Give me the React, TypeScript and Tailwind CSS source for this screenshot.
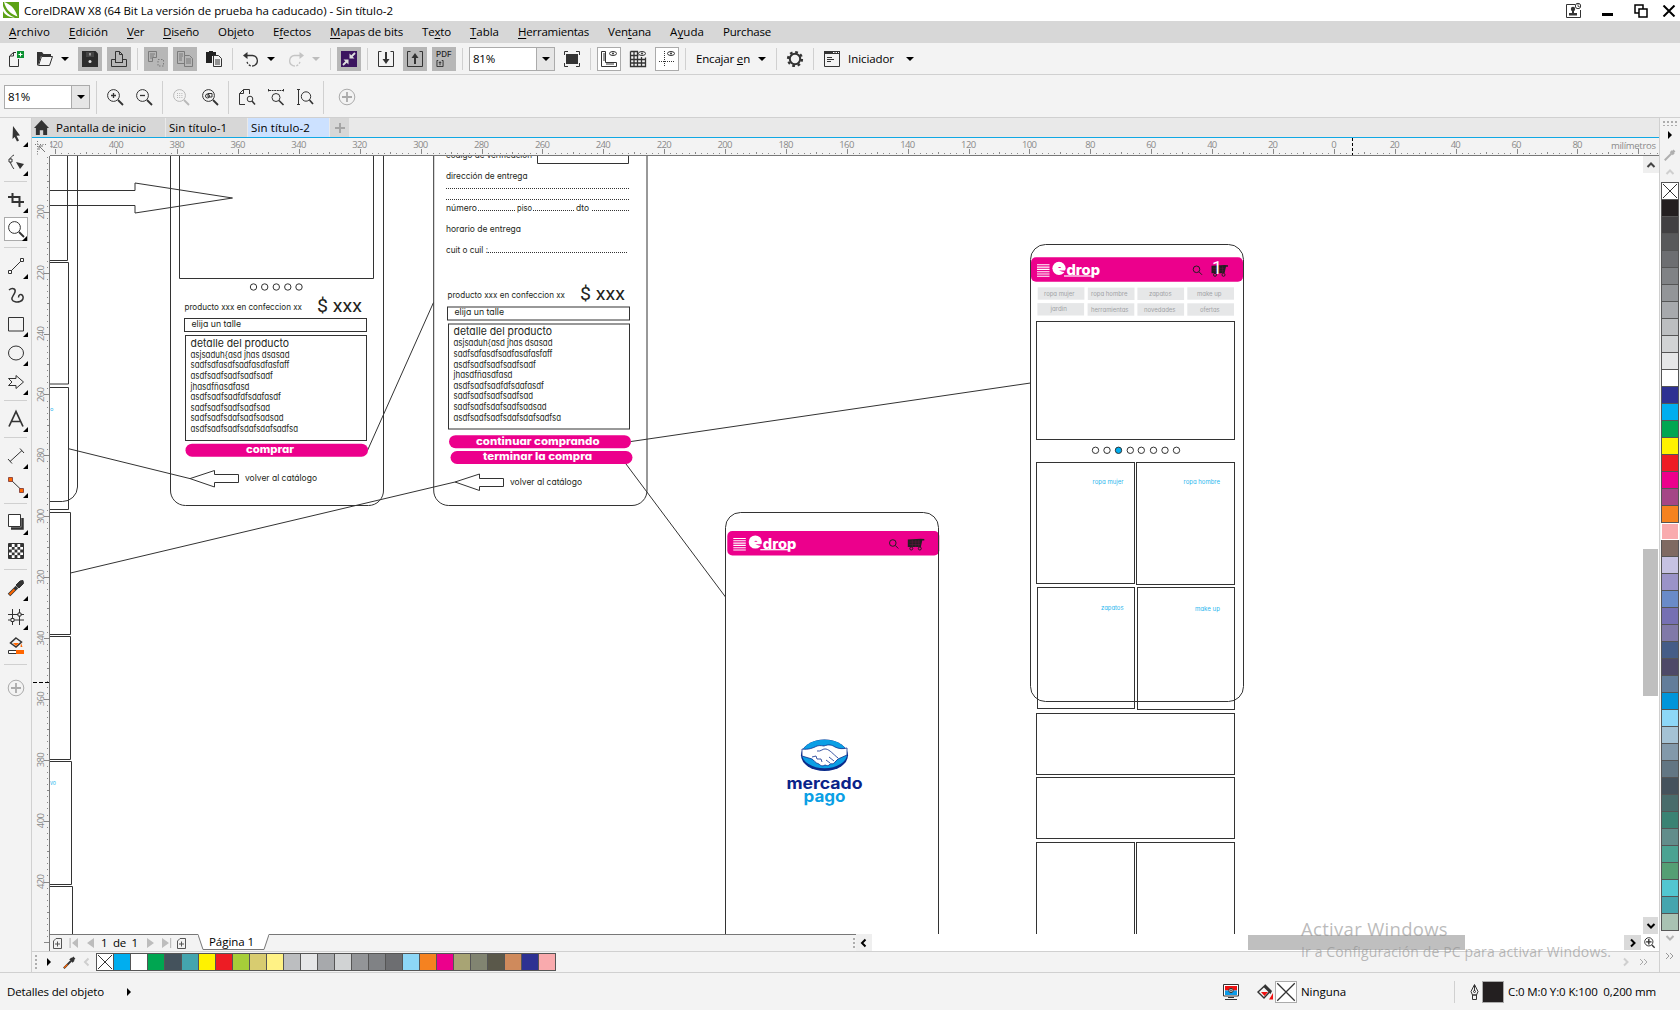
import { useLayoutEffect, useRef, useState } from "react";
import type { ReactNode } from "react";

/* Single-line label whose tracking is adjusted so that it spans exactly `w` pixels. */
function Fit({ w, children, className = "" }: { w: number; children: ReactNode; className?: string }) {
  const ref = useRef<HTMLSpanElement>(null);
  const [ls, setLs] = useState(0);
  useLayoutEffect(() => {
    const el = ref.current;
    if (!el) return;
    el.style.letterSpacing = "0px";
    const n = (el.textContent || "").length;
    const next = (w - el.getBoundingClientRect().width) / Math.max(1, n);
    el.style.letterSpacing = next + "px";
    setLs(next);
  }, [w]);
  return (
    <span className={"inline-block shrink-0 whitespace-pre " + className} style={{ width: w }}>
      <span ref={ref} style={{ letterSpacing: ls }}>
        {children}
      </span>
    </span>
  );
}

function Icon({ children, className = "" }: { children: ReactNode; className?: string }) {
  return (
    <svg viewBox="0 0 16 16" className={"h-4 w-4 shrink-0 overflow-visible " + className} fill="none" stroke="#333" strokeWidth="1">
      {children}
    </svg>
  );
}

function Cell({ children, kind = "plain" }: { children: ReactNode; kind?: "plain" | "gray" | "framed" }) {
  const look = kind === "gray" ? "bg-[#b7b7b7]" : kind === "framed" ? "border border-[#ababab] bg-white" : "";
  return <div className={"flex h-6 w-6 shrink-0 items-center justify-center " + look}>{children}</div>;
}

const Sep = ({ tall = false }: { tall?: boolean }) => (
  <div className={"mx-px w-px shrink-0 bg-[#d0d0d0] " + (tall ? "h-[33px]" : "h-[22px]")} />
);

const Caret = ({ light = false }: { light?: boolean }) => (
  <div className="flex w-4 shrink-0 justify-center">
    <div className={"h-0 w-0 border-x-4 border-t-4 border-x-transparent " + (light ? "border-t-[#bdbdbd]" : "border-t-black")} />
  </div>
);

const Combo = () => (
  <div className="flex h-6 w-[86px] shrink-0 border border-[#ababab] bg-white">
    <div className="flex w-[66px] items-center pl-[3px]">
      <Fit w={22}>81%</Fit>
    </div>
    <div className="flex w-[18px] items-center justify-center border-l border-[#ababab] bg-[#e6e6e6]">
      <Caret />
    </div>
  </div>
);

const PlusCircle = () => (
  <svg viewBox="0 0 18 18" className="h-[18px] w-[18px]" fill="none" stroke="#ababab">
    <circle cx="9" cy="9" r="7.8" />
    <path d="M9 4v10M4 9h10" strokeWidth="1.8" />
  </svg>
);

const menus: [ReactNode, number][] = [
  [<><u>A</u>rchivo</>, 41],
  [<><u>E</u>dición</>, 39],
  [<><u>V</u>er</>, 17],
  [<><u>D</u>iseño</>, 36],
  [<>Ob<u>j</u>eto</>, 36],
  [<>E<u>f</u>ectos</>, 38],
  [<><u>M</u>apas de bits</>, 73],
  [<>Te<u>x</u>to</>, 29],
  [<><u>T</u>abla</>, 29],
  [<><u>H</u>erramientas</>, 71],
  [<>Ven<u>t</u>ana</>, 43],
  [<>A<u>y</u>uda</>, 34],
  [<>Purchase</>, 48],
];

function TitleBar() {
  return (
    <div className="flex h-[21px] shrink-0 items-center bg-white">
      <svg viewBox="0 0 16 16" className="ml-[3px] h-4 w-4 -translate-y-px">
        <path d="M0 0h16v16H0z" fill="#5ca114" />
        <path d="M1 0C7 2 12 6 14.5 14.500C8 12 3 8 1 0zM0 4C2 10 7 14 12 15.500C6 15.500 2 13 0 9z" fill="#fff" />
      </svg>
      <Fit w={369} className="ml-[5px]">CorelDRAW X8 (64 Bit La versión de prueba ha caducado) - Sin título-2</Fit>
      <div className="ml-auto flex items-center">
        <svg viewBox="0 0 16 15" className="mr-5 h-[15px] w-4 overflow-visible" fill="none" stroke="#333">
          <path d="M9 1.500H.5v13h14V7" />
          <circle cx="7" cy="6" r="2.200" fill="#333" stroke="none" />
          <path d="M6 7h2v3h3v2.500H3V10h3z" fill="#333" stroke="none" />
          <circle cx="12" cy="3" r="2.700" /><path d="M12 1v2.500h1.500" strokeWidth=".8" />
        </svg>
        <div className="mr-[21px] mt-[7px] h-[3px] w-[11px] bg-black" />
        <svg viewBox="0 0 14 14" className="mr-[14px] h-[14px] w-[14px]" fill="none" stroke="#000" strokeWidth="1.500">
          <path d="M1 1h8v8H1z" /><path d="M5 5h8v8H5z" fill="#fff" />
        </svg>
        <svg viewBox="0 0 14 12" className="mr-[4px] h-3 w-[14px]" stroke="#000" strokeWidth="2">
          <path d="M1.500.5l11 11M12.500.5l-11 11" />
        </svg>
      </div>
    </div>
  );
}

const UndoShape = ({ c }: { c: string }) => (
  <g stroke={c}>
    <path d="M3.500 4.500H9.500a5.300 5.300 0 0 1 1.500 10.200" strokeWidth="1.300" />
    <path d="M11 14.700a5.300 5.300 0 0 1-7-4" strokeWidth="1.300" strokeDasharray="2 1.300" />
    <path d="M4.500 1v7L0 4.500z" fill={c} stroke="none" />
  </g>
);

function StandardBar() {
  return (
    <div className="flex h-[31px] shrink-0 items-center gap-[5px] pl-[4px]">
      <Cell><Icon><path d="M8 1.500H5.500L1.500 5v10.500h9V8M5.500 1.500V5H2" /><path d="M9 0h7v7H9z" fill="#0b9232" stroke="none" /><path d="M12.500 1.500v4M10.500 3.500h4" stroke="#fff" /></Icon></Cell>
      <div className="flex items-center">
        <Cell><Icon><path d="M0 15V1h5l1.500 2H14v2H4L2 12z" fill="#333" stroke="none" /><path d="M4.500 5.500h11l-3 9H1.500z" fill="#f3f3f3" /></Icon></Cell>
        <Caret />
      </div>
      <Cell kind="gray"><Icon><path d="M0 0h13.500L16 2.500V16H0z" fill="#2b2b2b" stroke="none" /><path d="M4 1h8v5H4z" fill="#444" stroke="none" /><path d="M8 2v2.500" stroke="#eee" /><circle cx="8" cy="10.500" r="1.500" fill="#ddd" stroke="none" /></Icon></Cell>
      <Cell kind="gray"><Icon><path d="M4.500 11V.500h4l3 3V11M8.500.5v3h3M4 8.500H.500v7h15v-7H12M4 11.500h8" /></Icon></Cell>
      <Sep />
      <Cell kind="gray"><Icon className="opacity-45"><path d="M.5.500h8v6h-4v4h-4zM2 3h5M2 5h4M2 7h2" /><path d="M10 8.500h5.500v6.500H10z" strokeDasharray="1.500 1.500" /></Icon></Cell>
      <Cell kind="gray"><Icon className="opacity-45"><path d="M7 12.500H.500V.5h7v4M2 3h4M2 5h4M2 7h3M2 9h3" /><path d="M7.500 4.500h5l3 3v8h-8zM9 8h5M9 10h5M9 12h5" /></Icon></Cell>
      <Cell><Icon><path d="M0 1h3V0h4v1h3v4H6v7H0z" fill="#222" stroke="none" /><path d="M7.500 4.500h5l3 3v8h-8zM9 9h5M9 11h5M9 13h5" /></Icon></Cell>
      <Sep />
      <div className="flex items-center">
        <Cell><Icon><UndoShape c="#333" /></Icon></Cell>
        <Caret />
      </div>
      <div className="flex items-center">
        <Cell><Icon><g transform="matrix(-1 0 0 1 16 0)"><UndoShape c="#c4c4c4" /></g></Icon></Cell>
        <Caret light />
      </div>
      <Sep />
      <Cell kind="gray"><Icon><path d="M0 0h16v16H0z" fill="#3b145f" stroke="none" /><path d="M14 2l-4 4M2 14l4-4" stroke="#ddd" strokeWidth="1.800" /><path d="M8.500 2.500v5h5zM7.500 13.500v-5h-5z" fill="#ddd" stroke="none" /></Icon></Cell>
      <Sep />
      <Cell><Icon><path d="M3.500.500h-3v15h15V.500h-3" /><path d="M8 1v9" strokeWidth="2" /><path d="M4.500 8h7L8 13z" fill="#333" stroke="none" /></Icon></Cell>
      <Cell kind="gray"><Icon><path d="M3.500.500h-3v15h15V.500h-3" /><path d="M8 13V5" strokeWidth="2" /><path d="M4.500 7h7L8 2z" fill="#333" stroke="none" /></Icon></Cell>
      <Cell kind="gray">
        <div className="flex h-4 w-4 flex-col">
          <span className="font-['Inter'] text-[8px] font-medium leading-[7px] tracking-[0.1px] text-[#222]">PDF</span>
          <svg viewBox="0 0 8 8" className="mt-[2px] h-[7px] w-[8px]" fill="none" stroke="#222"><path d="M2 .500H.500v7h7v-7H6M4 6V2M2.500 3.500L4 2l1.500 1.500" /></svg>
        </div>
      </Cell>
      <Sep />
      <Combo />
      <Cell><Icon><path d="M2 3h12v10H2z" fill="#333" stroke="none" /><path d="M.500 4V.500H4M12 .500h3.500V4M.500 12v3.500H4M12 15.500h3.500V12" /></Icon></Cell>
      <Sep />
      <Cell kind="framed"><Icon><path d="M.500.500h4v11h11v4H.5zM2 3h2M2 5h2M2 7h2M2 9h2M6 12v2M8 12v2M10 12v2M12 12v2" /><ellipse cx="12" cy="2.500" rx="3.500" ry="2" /><circle cx="12" cy="2.500" r="1" fill="#333" stroke="none" /></Icon></Cell>
      <Cell><Icon><path d="M.500.500v15h15v-9M.500.500h7v15M.500 4.500h8M.500 8.500h15M.500 12h15M4 .500v15M11.500 6v9.500" strokeWidth="1.300" /><ellipse cx="12" cy="2.500" rx="3.500" ry="2" /><circle cx="12" cy="2.500" r="1" fill="#333" stroke="none" /></Icon></Cell>
      <Cell kind="framed"><Icon><path d="M5.500 0v16M0 10.500h16" strokeDasharray="1 1" /><ellipse cx="12" cy="2.500" rx="3.500" ry="2" /><circle cx="12" cy="2.500" r="1" fill="#333" stroke="none" /></Icon></Cell>
      <Sep />
      <div className="flex items-center pl-1">
        <Fit w={54}>Encajar <u>e</u>n</Fit>
        <span className="w-1" />
        <Caret />
      </div>
      <Sep />
      <Cell><Icon><circle cx="8" cy="8" r="5.200" strokeWidth="2" /><circle cx="8" cy="8" r="7" strokeWidth="2.200" strokeDasharray="2.750 2.750" /></Icon></Cell>
      <Sep />
      <Cell><Icon><path d="M.500.500h15v15H.500z" /><path d="M0 0h16v3H0z" fill="#333" stroke="none" /><path d="M9 1.500h1.500M11.500 1.500H13M14 1.500h1" stroke="#fff" /><path d="M3 6.500h5M3 8.500h7M3 10.500h4" /></Icon></Cell>
      <div className="-ml-px flex items-center gap-[8px]">
        <Fit w={46}>Iniciador</Fit>
        <Caret />
      </div>
    </div>
  );
}

const Lens = ({ children, faint = false }: { children?: ReactNode; faint?: boolean }) => (
  <Icon className={faint ? "opacity-30" : ""}><circle cx="6.500" cy="6.500" r="5.900" /><path d="M11 11l5 5" strokeWidth="1.800" />{children}</Icon>
);

function PropertyBar() {
  return (
    <div className="flex h-[42px] shrink-0 items-center gap-[5px] pl-[4px] pt-[2px]">
      <Combo />
      <Sep tall />
      <Cell><Lens><path d="M6.500 4v5M4 6.500h5" strokeWidth="1.300" /></Lens></Cell>
      <Cell><Lens><path d="M4 6.500h5" strokeWidth="1.300" /></Lens></Cell>
      <Sep tall />
      <Cell><Lens faint><path d="M4 4.500h6M4 6.500h6M4 8.500h6" strokeDasharray="1 1.200" /></Lens></Cell>
      <Cell><Lens><circle cx="5.500" cy="7" r="2" /><path d="M6 4.500h4v3.500H6z" /></Lens></Cell>
      <Sep tall />
      <Cell><Icon><path d="M6 15.500H.500V4.500l4-4h6V5M4.500.500v4h-4" /><circle cx="11" cy="10" r="2.800" /><path d="M13 12l3 3.500" strokeWidth="1.500" /></Icon></Cell>
      <Cell><Icon><path d="M.500 0v3M15.500 0v3M1 1.500h14" strokeDasharray="2 .6" /><circle cx="8" cy="8.500" r="4" /><path d="M11 11.500l4.500 4.500" strokeWidth="1.600" /></Icon></Cell>
      <Cell><Icon><path d="M0 .500h3M0 15.500h3M1.500 1v14" /><circle cx="9" cy="7.500" r="4.700" /><path d="M12.500 11l3.500 4" strokeWidth="1.600" /></Icon></Cell>
      <Sep tall />
      <div className="ml-[5px]"><Cell><PlusCircle /></Cell></div>
    </div>
  );
}

function Tool({ children, fly = false, active = false }: { children: ReactNode; fly?: boolean; active?: boolean }) {
  return (
    <div className={"relative flex h-6 w-6 shrink-0 items-center justify-center " + (active ? "border border-[#ababab] bg-white" : "")}>
      {children}
      {fly && <div className="absolute -bottom-px right-0 h-0 w-0 border-b-[5px] border-l-[5px] border-b-black border-l-transparent" />}
    </div>
  );
}

const ToolSep = () => <div className="my-px h-px w-[23px] shrink-0 bg-[#d0d0d0]" />;

function Toolbox() {
  return (
    <div className="flex w-8 shrink-0 flex-col items-center gap-[5px] border-r border-[#d0d0d0] pt-1">
      <Tool fly><Icon><path d="M5 0l7 9.500-3.500.3 2.500 4.700-2 1L6.700 11 4.500 13z" fill="#333" stroke="none" /></Icon></Tool>
      <Tool fly><Icon><path d="M6 0C2 2 1 5 2.500 8S5 13 6 14" /><path d="M1 4h3v3H1z" fill="#fff" /><path d="M8 7l8 2-4 5z" fill="#333" stroke="none" /></Icon></Tool>
      <ToolSep />
      <Tool fly><Icon><path d="M4.500 1v9H16M0 5h11.500v10" strokeWidth="2" /></Icon></Tool>
      <Tool fly active><Lens /></Tool>
      <ToolSep />
      <Tool fly><Icon><path d="M3 13L13 3" /><path d="M.500 12.500h3v3h-3zM12.500.500h3v3h-3z" fill="#fff" /></Icon></Tool>
      <Tool><Icon><path d="M1 3C4 .5 8 1.500 7 5S3 10 4 12.500s5 3 8 2 4-4 2.500-6-4-1-4 2" strokeWidth="1.500" /></Icon></Tool>
      <Tool fly><Icon><path d="M.5 1.500h15v13.500H.5z" /></Icon></Tool>
      <Tool fly><Icon><ellipse cx="8" cy="8" rx="7.500" ry="7" /></Icon></Tool>
      <Tool fly><Icon><path d="M.500 4.500H8V1.500l7.500 6.500L8 14.500v-3H.500L4 8z" /></Icon></Tool>
      <ToolSep />
      <Tool fly><Icon><path d="M1 15.500L8 .500l7 15M3.500 10.500h9" strokeWidth="1.700" /></Icon></Tool>
      <ToolSep />
      <Tool fly><Icon><path d="M2 13.500L14 2.500M0 11l4 4.500M12 .500L16 5" /></Icon></Tool>
      <Tool fly><Icon><path d="M2 2l12 11.500" /><path d="M.5.500h4v4h-4zM11.500 11.500h4v4h-4z" fill="#f60" stroke="#733" strokeWidth=".8" /></Icon></Tool>
      <ToolSep />
      <Tool fly><Icon><path d="M3 14.500h11.500V4" strokeWidth="2.500" /><path d="M.5.500h12v12H.500z" fill="#fff" /></Icon></Tool>
      <Tool>
        <Icon>
          <path d="M.5.500h15v15H.500z" fill="#fff" />
          <path d="M1 2.500h15M1 8h15M1 13.500h15" strokeWidth="2.800" strokeDasharray="2.800 2.800" />
          <path d="M3.800 5.300h12M3.800 10.800h12" strokeWidth="2.800" strokeDasharray="2.800 2.800" />
        </Icon>
      </Tool>
      <ToolSep />
      <Tool fly><Icon><path d="M1 15L9 7" strokeWidth="3.500" /><path d="M1.500 14.500l5-5" stroke="#f60" strokeWidth="2" /><path d="M8 5l4-4 3-.5.5 3-4.500 4.500z" fill="#333" /></Icon></Tool>
      <Tool fly><Icon><path d="M4.500 0v16M11.500 0v16M0 5.500h16M0 11h16" /><path d="M3 9.500h3v3H3zM10 4h3v3h-3z" fill="#fff" /></Icon></Tool>
      <Tool><Icon><path d="M8 0l5.500 4L8 9 2.500 5z" strokeWidth="1.500" /><path d="M5 5h6L8 8zM13 5l1.500 4h-2z" fill="#f60" stroke="none" /><path d="M.500 12.500h15v3H.500z" fill="#fff" /><path d="M8 12h8v4H8z" fill="#f60" stroke="none" /></Icon></Tool>
      <ToolSep />
      <div className="mt-[5px]"><Tool><PlusCircle /></Tool></div>
    </div>
  );
}

/* Pixel scale of the document: millimetres to screen. */
const MM = 3.0442;

function TopRuler() {
  const zero = 1333.9;
  const ticks: ReactNode[] = [];
  for (let mm = -106; mm <= 420; mm += 2) {
    const x = Math.round(zero - mm * MM) - 50;
    if (x < 0) continue;
    const h = mm % 20 === 0 ? 5 : mm % 10 === 0 ? 2 : 1;
    ticks.push(<path key={mm} d={`M${x + 0.5} ${h === 1 ? 15 : 16 - h}v${h}`} />);
  }
  const labels: ReactNode[] = [];
  for (let mm = -80; mm <= 420; mm += 20) {
    labels.push(
      <text key={mm} x={zero - mm * MM - 50} y={10} textAnchor="middle" className="fill-[#8a8a8a] font-['Open_Sans'] text-[9.500px]" textLength={mm === 0 ? 5 : Math.abs(mm) < 100 ? 10 : 15}>{Math.abs(mm)}</text>
    );
  }
  return (
    <div className="flex h-[18px] shrink-0">
      <svg viewBox="0 0 18 18" className="h-[18px] w-[18px] shrink-0" fill="none" stroke="#777">
        <path d="M5.500 3v14M3 6.500h12" strokeDasharray="1 1.500" /><path d="M7 8l6 6M7 8h4M7 8v4" />
      </svg>
      <svg viewBox="0 0 1609 18" className="h-[18px] w-[1609px] shrink-0" stroke="#888" fill="none">
        {ticks}
        <path d="M0 17.500h1609" stroke="#777" />
        <path d="M1302.500 0v17" stroke="#000" strokeDasharray="3 2" />
        <g stroke="none">
          {labels}
          <text x="1561" y="10.500" textLength="45" className="fill-[#8a8a8a] font-['Open_Sans'] text-[9.500px]">milímetros</text>
        </g>
      </svg>
    </div>
  );
}

function LeftRuler() {
  const y200 = 211.800;
  const ticks: ReactNode[] = [];
  for (let mm = 182; mm <= 440; mm += 2) {
    const y = Math.round(y200 + (mm - 200) * MM) - 156;
    const h = mm % 20 === 0 ? 5 : mm % 10 === 0 ? 2 : 1;
    ticks.push(<path key={mm} d={`M${h === 1 ? 15 : 17 - h} ${y + 0.5}h${h}`} />);
  }
  const labels: ReactNode[] = [];
  for (let mm = 200; mm <= 420; mm += 20) {
    const y = y200 + (mm - 200) * MM - 156;
    labels.push(<text key={mm} x={0} y={0} transform={`translate(12 ${y}) rotate(-90)`} textAnchor="middle" textLength="15" className="fill-[#8a8a8a] font-['Open_Sans'] text-[9.500px]">{mm}</text>);
  }
  return (
    <svg viewBox="0 0 18 795" className="h-[795px] w-[18px] shrink-0" stroke="#888" fill="none">
      {ticks}
      <path d="M17.500 0v795" stroke="#777" />
      <path d="M1 526.500h16" stroke="#000" strokeDasharray="4 2" />
      <g stroke="none">{labels}</g>
    </svg>
  );
}

type TProps = { x: number; x2: number; y: number; s?: number; children: string; c?: string };
const T = ({ x, x2, y, s = 9, children, c = "fill-[#231f20]" }: TProps) => (
  <text x={x} y={y} fontSize={s} textLength={x2 - x} lengthAdjust="spacingAndGlyphs" stroke="none" className={"font-['Inter','Liberation_Sans'] [font-feature-settings:'cv11'] " + c}>{children}</text>
);

const Box = ({ x, y, x2, y2 }: { x: number; y: number; x2: number; y2: number }) => (
  <rect x={Math.floor(x) + 0.5} y={Math.floor(y) + 0.5} width={Math.floor(x2) - Math.floor(x)} height={Math.floor(y2) - Math.floor(y)} />
);

const detail: [string, number][] = [
  ["asjsaduh{asd jhas dsasad", 99],
  ["sadfsdfasdfsadfasdfasfaff", 99],
  ["asdfsadfsadfsadfsadf", 82.5],
  ["jhasdfñasdfasd", 59],
  ["asdfsadfsadfdfsdafasdf", 90.5],
  ["sadfsadfsadfsadfsad", 79.500],
  ["sadfsadfsdafsadfsadsad", 93],
  ["asdfsadfsadfsdafsdafsadfsa", 107.5],
];

function Product({ dx, dy, lift = 0 }: { dx: number; dy: number; lift?: number }) {
  return (
    <g transform={`translate(${dx} ${dy})`}>
      <T x={184.5} x2={302} y={309.5} s={9}>producto xxx en confeccion xx</T>
      <text x="317" y={311.500 - lift} fontSize="19" textLength="45" lengthAdjust="spacingAndGlyphs" stroke="none" className="fill-[#231f20] font-['Roboto']">$ xxx</text>
      <Box x={184} y={318} x2={366} y2={331} />
      <T x={191.500} x2={241} y={326.500}>elija un talle</T>
      <Box x={185} y={335} x2={366} y2={440} />
      <T x={190.5} x2={289} y={346.5} s={11}>detalle del producto</T>
      {detail.map(([t, w], i) => (
        <T key={t} x={190.5} x2={190.5 + w} y={357.8 + i * 10.6} s={9.300}>{t}</T>
      ))}
    </g>
  );
}

function Pill({ x, y, w, label, a, b }: { x: number; y: number; w: number; label: string; a: number; b: number }) {
  return (
    <g stroke="none">
      <rect x={x} y={y} width={w} height="13" rx="6.500" fill="#ec008c" />
      <text x={a} y={y + 9.300} fontSize="10.500" fontWeight="800" textLength={b - a} lengthAdjust="spacingAndGlyphs" className="fill-white font-['Inter'] [font-feature-settings:'cv11']">{label}</text>
    </g>
  );
}

/* Magenta header of each phone mock-up; origin is its top-left corner. */
function Header({ x, y, badge = false }: { x: number; y: number; badge?: boolean }) {
  return (
    <g transform={`translate(${x} ${y})`} stroke="none">
      <rect width="212" height="24.500" rx="5" fill="#ec008c" />
      <path d="M6 7.500h12.500M6 9.800h12.500M6 12.100h12.500M6 14.400h12.500M6 16.700h12.500M6 19h12.500" stroke="#fff" strokeWidth="1.100" />
      <circle cx="28" cy="11" r="6.600" fill="#fff" />
      <path d="M27 10.800h3.200a1.800 1.800 0 0 0-3.400.4z" fill="#ec008c" />
      <path d="M28 13.200h7v1.800l-3.500-.6z" fill="#ec008c" />
      <text x="35.500" y="17.500" fontSize="14" fontWeight="800" textLength="33.500" lengthAdjust="spacingAndGlyphs" className="fill-white font-['Inter']">drop</text>
      <path d="M33 18.700h28" stroke="#fff" strokeWidth="1.200" />
      <g fill="none" stroke="#231f20"><circle cx="165.500" cy="12" r="3.300" /><path d="M168 14.500l3 3" /></g>
      <path d="M180.500 8.500l13-.8 3.500.3v1.500h-2l-1.500 6.500h-13z" fill="#231f20" />
      <path d="M182 11h11M182 13.500h11M185 9v7M188.500 9v7M191.500 9v7" stroke="#7a0f4d" strokeWidth=".4" />
      <g fill="#ec008c" stroke="#231f20"><circle cx="184" cy="17.500" r="1.500" /><circle cx="192.500" cy="17.500" r="1.500" /></g>
      {badge && <text x="181" y="17" fontSize="18" className="fill-white font-['Roboto']">1</text>}
    </g>
  );
}

const tags: [string, number, number, number, number][] = [
  ["ropa mujer", 1037.7, 287.3, 1044, 1074.500],
  ["ropa hombre", 1087.8, 287.6, 1091, 1127.500],
  ["zapatos", 1137.4, 287.6, 1149, 1171.500],
  ["make up", 1187.3, 287.3, 1197, 1221.500],
  ["jardin", 1037.4, 303.1, 1050.500, 1067],
  ["herramientas", 1087.6, 303.3, 1091, 1128.500],
  ["novedades", 1137.4, 303.3, 1144, 1175.500],
  ["ofertas", 1187.3, 303.3, 1200, 1219.500],
];

function Artwork() {
  const cy = "fill-[#29b6ee]";
  return (
    <svg viewBox="50 156 1609 778" className="h-[778px] w-[1609px]" fill="none" stroke="#333" strokeWidth="1">
      {/* clipped catalogue page on the left */}
      <path d="M77.500 156V487a15 15 0 0 1-15 14.500H50" />
      <path d="M67.500 156V260.500H50M50 262.500h18.500v121.500H50M50 387.500h18.500V509.500H50M50 512.500h20.500V634.500H50M50 636.500h20.500V759.500H50M50 761.500h21.500V884.500H50M50 886.500h22.500V934" />
      <T x={50} x2={53.500} y={411} s={5} c={cy}>o</T>
      <T x={50} x2={56} y={785} s={6} c={cy}>vo</T>
      <path d="M50 190.500h85V183l97.500 15L135 213v-7.500H50" />
      <path d="M68.500 448.700L190 478.600M70.500 573L455 482M367.700 450L433.500 302.500M631 441.500L1030.500 383M626 464L725.500 597" />

      {/* product page */}
      <path d="M170.500 156V490a15 15 0 0 0 15 15.500H368.500a15 15 0 0 0 15-15.500V156M179.500 156V278.500H373.500V156" />
      {[253.500, 264.700, 276.300, 287.800, 299].map((x) => <circle key={x} cx={x} cy="287" r="3.200" />)}
      <Product dx={0} dy={0} />
      <Pill x={185.500} y={443.700} w={182.500} label="comprar" a={246} b={294} />
      <path d="M190 478.600L214.500 470.500v4h24v8h-24v4.500z" />
      <T x={245} x2={317} y={481}>volver al catálogo</T>

      {/* checkout page */}
      <path d="M433.700 156V490a15 15 0 0 0 15 15.500H632a15 15 0 0 0 15-15.500V156M537.500 156V163.500H628.500V156" />
      <T x={446} x2={532} y={158}>código de verificación</T>
      <T x={446} x2={527.500} y={178.500}>dirección de entrega</T>
      <path d="M446 188.500H630M446 199.500H630M478 210.500H516M533 210.500H575M592 210.500H630M488 252.500H627" strokeDasharray="1 1" />
      <T x={446} x2={477} y={210.500}>número</T>
      <T x={517} x2={532} y={210.500}>piso</T>
      <T x={576} x2={589} y={210.500}>dto</T>
      <T x={446} x2={521} y={231.500}>horario de entrega</T>
      <T x={446} x2={488} y={253}>cuit o cuil :</T>
      <Product dx={263} dy={-11.500} lift={0.5} />
      <Pill x={449} y={435.200} w={182} label="continuar comprando" a={476} b={599.500} />
      <Pill x={450.500} y={451} w={182} label="terminar la compra" a={483} b={592} />
      <path d="M455 482L479.500 474v4.500h24v8h-24v4z" />
      <T x={510} x2={582} y={484.500}>volver al catálogo</T>

      {/* payment page */}
      <path d="M725.500 934V527.500a15 15 0 0 1 15-15H923.500a15 15 0 0 1 15 15V934" />
      <Header x={727.300} y={531} />
      <path d="M938.500 530V557" />
      <g stroke="none">
        <ellipse cx="824.500" cy="755.300" rx="23.500" ry="15.700" fill="#0a2c8b" />
        <ellipse cx="824.500" cy="754" rx="22.600" ry="14.300" fill="#0b9fe5" />
        <path d="M802 749c6 1 11-1 15-3 3-1 6 0 7 0 5-2 8-1 11 1 4 2 8 2 12 1v7l-9 4-3 3c-2 3-4 1-5 2-2 3-4 1-5 1-3 2-5 0-6-1-4-1-5-4-7-5l-10-3z" fill="#fff" stroke="#0a2c8b" strokeWidth=".8" />
        <path d="M817 751c4 1 6-3 9-2 4 1 7 5 12 9M826 760l4 3M829 757l5 4M812 757l4-1 1 3 4 0 1 3" fill="none" stroke="#0a2c8b" strokeWidth=".8" />
        <text x="786.500" y="788.500" fontSize="16" fontWeight="700" textLength="76" lengthAdjust="spacingAndGlyphs" className="fill-[#0a2389] font-['Inter']">mercado</text>
        <text x="803.500" y="802" fontSize="16" fontWeight="700" textLength="42" lengthAdjust="spacingAndGlyphs" className="fill-[#0b9fe5] font-['Inter']">pago</text>
      </g>

      {/* home page */}
      <rect x="1030.500" y="244.500" width="213" height="457" rx="15" />
      <Header x={1031} y={257.300} badge />
      {tags.map(([t, x, y, a, b]) => (
        <g key={t} stroke="none">
          <rect x={x} y={y} width="46.700" height="12.400" fill="#e6e7e8" />
          <T x={a} x2={b} y={y + 8.200} s={6.500} c="fill-[#a0a2a5]">{t}</T>
        </g>
      ))}
      <Box x={1036} y={321} x2={1234} y2={439} />
      {[1095.500, 1107, 1118.500, 1130.300, 1141.300, 1153.500, 1165, 1176.500].map((x, i) => (
        <circle key={x} cx={x} cy="450.300" r="3.200" className={i === 2 ? "fill-[#00aeef]" : ""} />
      ))}
      <Box x={1036} y={462} x2={1134} y2={583} />
      <Box x={1136} y={462} x2={1234} y2={584} />
      <Box x={1037} y={587} x2={1134} y2={708} />
      <Box x={1137} y={587} x2={1234} y2={709} />
      <Box x={1036} y={713} x2={1234} y2={774} />
      <Box x={1036} y={777} x2={1234} y2={838} />
      <Box x={1036} y={842} x2={1134} y2={950} />
      <Box x={1136} y={842} x2={1234} y2={950} />
      <T x={1092.500} x2={1123.500} y={484} s={6.500} c={cy}>ropa mujer</T>
      <T x={1183.500} x2={1220} y={484} s={6.500} c={cy}>ropa hombre</T>
      <T x={1101} x2={1123.500} y={609.500} s={6.500} c={cy}>zapatos</T>
      <T x={1195} x2={1220} y={611} s={6.500} c={cy}>make up</T>
    </svg>
  );
}

const docColors = [
  "#00aeef", "#ffffff", "#00a651", "#44525c", "#44a5ae", "#fff200", "#ed1c24", "#a6ce39", "#d8cc70", "#fff285", "#bcbec0", "#e6e7e8", "#a7a9ac",
  "#d1d3d4", "#939598", "#808285", "#6d6e71", "#8dd7f7", "#f58220", "#ec008c", "#a8a474", "#818471", "#5a584a", "#cf8a5c", "#2e3192", "#f9aaad",
];

const sideColors = [
  "#231f20", "#414042", "#58595b", "#6d6e71", "#808285", "#939598", "#a7a9ac", "#bcbec0", "#d1d3d4", "#e6e7e8", "#ffffff", "#2e3192", "#00aeef",
  "#00a651", "#fff200", "#ed1c24", "#ec008c", "#a54686", "#f58220", "#f9aaad", "#7f6a62", "#c6c2e2", "#9a93c8", "#6a8bc8", "#7670b3", "#8079a8",
  "#455d87", "#4e4968", "#637d9a", "#0095da", "#8dd7f7", "#a4c2d4", "#8299aa", "#627683", "#44525c", "#486c6b", "#3a8273", "#628d8b", "#4ba392",
  "#549f74", "#52c6d0", "#44a5ae", "#a9c2b3",
];

const Cross = ({ className }: { className: string }) => (
  <svg viewBox="0 0 16 16" className={className} fill="#fff" stroke="#333"><path d="M0 0h16v16H0z" stroke="none" /><path d="M1 1l14 14M15 1L1 15" /></svg>
);

const Grip = ({ className }: { className: string }) => (
  <div className={"bg-[radial-gradient(#aaa_0.7px,transparent_0.9px)] bg-size-[4px_4px] " + className} />
);

const Chevron = ({ d, c = "stroke-black", className = "" }: { d: string; c?: string; className?: string }) => (
  <svg viewBox="0 0 10 10" className={"h-[10px] w-[10px] shrink-0 " + c + " " + className} fill="none" strokeWidth="2"><path d={d} /></svg>
);
const UP = "M1.500 7L5 3.500 8.500 7", DOWN = "M1.500 3L5 6.500 8.500 3", RIGHT = "M3 1.500L6.500 5 3 8.500", LEFT = "M6.500 1.500L3 5l3.500 3.500";

function SidePalette() {
  return (
    <div className="flex w-[21px] shrink-0 flex-col items-center border-l border-[#d0d0d0]">
      <Grip className="mt-[2px] h-[6px] w-4 shrink-0" />
      <div className="mt-[5px] h-0 w-0 shrink-0 border-y-4 border-l-4 border-y-transparent border-l-black" />
      <Icon className="mt-[10px] !h-3 !w-3 opacity-35"><path d="M1 15L10 6" strokeWidth="2.500" /><path d="M9 3l4 4M11 5l3-3" strokeWidth="3.500" /></Icon>
      <Chevron d={UP} c="stroke-[#cfcfcf]" className="mt-[6px]" />
      <div className="mt-[5px] flex w-[18px] flex-col border-x border-t border-[#555]">
        <div className="flex h-[17px] shrink-0 border-b border-[#555] bg-white"><Cross className="h-4 w-4" /></div>
        {sideColors.map((c, i) => (
          <div key={i} className={"h-[17px] shrink-0 " + (i === 19 ? "-mx-px border border-white" : "border-b border-[#555]")} style={{ backgroundColor: c }} />
        ))}
      </div>
      <Chevron d={DOWN} c="stroke-[#b5b5b5]" className="mt-[2px]" />
      <svg viewBox="0 0 10 8" className="mt-[9px] h-2 w-[10px]" fill="none" stroke="#999"><path d="M1 1l3 3-3 3M5 1l3 3-3 3" /></svg>
    </div>
  );
}

const AddPage = () => (
  <svg viewBox="0 0 9 11" className="h-[11px] w-[9px] shrink-0" fill="none" stroke="#555"><path d="M3 .500h5.500v10h-8V3zM4.500 3.500v5M2 6h5" /></svg>
);

function PageRow() {
  return (
    <div className="flex h-[17px] shrink-0 bg-white">
      <div className="flex w-[806px] shrink-0 border-t border-[#777] bg-[#f3f3f3]">
        <div className="flex items-center pl-[3px]">
          <AddPage />
          <svg viewBox="0 0 26 10" className="ml-[7px] h-[10px] w-[26px]" fill="#bdbdbd"><path d="M.500 0h1.200v10H.500zM9 0v10L3 5zM25 0v10l-7-5z" /></svg>
          <Fit w={37} className="ml-[6px]">1  de  1</Fit>
          <svg viewBox="0 0 26 10" className="ml-[8px] h-[10px] w-[26px]" fill="#bdbdbd"><path d="M1 0v10l7-5zM16 0v10l7-5zM24 0h1.200v10H24z" /></svg>
          <span className="w-[5px]" />
          <AddPage />
        </div>
        <div className="relative -mt-px ml-[12px] h-[17px] w-[71px]">
          <svg viewBox="0 0 71 17" className="absolute inset-0 h-[17px] w-[71px]" fill="#fff" stroke="#777"><path d="M0 0h71l-5 15.500H5z" stroke="none" /><path d="M0 .500L5 15.500h61l5-15" /></svg>
          <Fit w={45} className="relative ml-[11px] leading-[15px]">Página 1</Fit>
        </div>
        <Grip className="ml-auto mt-[2px] h-3 w-1" />
      </div>
      <div className="flex w-4 items-center justify-center bg-[#efefef]"><Chevron d={LEFT} /></div>
      <div className="ml-auto mr-[159px] h-[15px] w-[217px] self-center bg-[#bfbfbf]" />
      <div className="flex h-[15px] w-[17px] items-center justify-center self-center bg-[#dadada]"><Chevron d={RIGHT} /></div>
      <div className="mr-px flex w-[17px] items-center justify-center">
        <Icon className="!h-[11px] !w-[11px]"><circle cx="7" cy="7" r="6" strokeWidth="1.400" /><path d="M11.500 11.500l4 4" strokeWidth="2" /><path d="M7 3v8M3 7h8" strokeWidth="2" /></Icon>
      </div>
    </div>
  );
}

function DocPalette() {
  return (
    <div className="flex h-[21px] shrink-0 items-center border-t border-[#d0d0d0]">
      <Grip className="ml-[2px] h-4 w-[5px]" />
      <div className="ml-[8px] h-0 w-0 border-y-4 border-l-4 border-y-transparent border-l-black" />
      <Icon className="ml-3 !h-[13px] !w-[13px]"><path d="M1 15L10 6" strokeWidth="2.500" /><path d="M1.500 14.500l4-4" stroke="#f60" strokeWidth="1.500" /><path d="M9 3l4 4M11 5l3-3" strokeWidth="3.500" /></Icon>
      <Chevron d={LEFT} c="stroke-[#cfcfcf]" className="ml-[6px]" />
      <div className="ml-[4px] flex h-[18px] border-y border-l border-[#555]">
        <div className="w-[17px] border-r border-[#555]"><Cross className="h-4 w-4" /></div>
        {docColors.map((c, i) => <div key={i} className="w-[17px] border-r border-[#555]" style={{ backgroundColor: c }} />)}
      </div>
      <Chevron d={RIGHT} c="stroke-[#cfcfcf]" className="ml-auto" />
      <svg viewBox="0 0 10 8" className="ml-[8px] mr-[10px] h-2 w-[10px]" fill="none" stroke="#aaa"><path d="M1 1l3 3-3 3M5 1l3 3-3 3" /></svg>
    </div>
  );
}

function StatusBar() {
  return (
    <div className="flex h-[38px] shrink-0 items-center border-t border-[#d0d0d0]">
      <Fit w={97} className="ml-[7px]">Detalles del objeto</Fit>
      <div className="ml-[23px] h-0 w-0 border-y-4 border-l-4 border-y-transparent border-l-black" />
      <div className="ml-auto flex items-center">
        <Icon><path d="M.500.500h15v11.500H.500z" fill="#fff" /><path d="M2 2h12v4.500H2z" fill="#e11" stroke="none" /><path d="M2 6.500h12V11H2z" fill="#0a9be8" stroke="none" /><circle cx="8" cy="6.500" r="2.200" fill="#fff" /><circle cx="8" cy="6.500" r=".8" /><path d="M5 13.500h6M2 15.500h12" /></Icon>
        <Icon className="ml-[18px]"><path d="M7.500 2L13 7.500 7 14 1 8z" strokeWidth="1.400" /><path d="M8 0l7 7-1.500 3L7 3.500z" fill="#333" stroke="none" /><path d="M4 8h7l-3.500 4zM16 9v6.500h-4z" fill="#e11" stroke="none" /></Icon>
        <div className="ml-[2px] h-[22px] w-[22px] border border-[#ababab]"><Cross className="h-5 w-5" /></div>
        <Fit w={45} className="ml-[4px]">Ninguna</Fit>
        <div className="ml-[108px] h-[22px] w-px bg-[#d0d0d0]" />
        <svg viewBox="0 0 9 16" className="ml-[15px] h-4 w-[9px]" fill="none" stroke="#333"><path d="M4.500.500L8 7.500 6.500 11h-4L1 7.500zM2.500 11h4v4.500h-4zM4.500 1v6" /><circle cx="4.500" cy="7.500" r="1" /></svg>
        <div className="ml-[3px] h-[22px] w-[22px] border border-[#ababab] bg-[#231f20]" />
        <Fit w={148} className="ml-[4px] mr-[24px]">C:0 M:0 Y:0 K:100  0,200 mm</Fit>
      </div>
    </div>
  );
}

export default function App() {
  return (
    <div className="relative flex h-[1010px] w-[1680px] flex-col overflow-hidden bg-[#f3f3f3] font-['Open_Sans','Noto_Sans',sans-serif] text-[11.500px] leading-4 text-black">
      <TitleBar />
      <div className="flex h-[22px] shrink-0 items-center gap-[19px] bg-[#d7d7d7] pl-[9px]">
        {menus.map(([m, w], i) => <Fit key={i} w={w} className="[&_u]:underline-offset-2">{m}</Fit>)}
      </div>
      <StandardBar />
      <div className="h-px shrink-0 bg-[#d0d0d0]" />
      <PropertyBar />
      <div className="h-px shrink-0 bg-[#d0d0d0]" />
      <div className="flex h-[854px] shrink-0">
        <Toolbox />
        <div className="flex w-[1627px] shrink-0 flex-col">
          <div className="flex h-[19px] shrink-0 gap-px bg-[#e9e9e9]">
            <div className="flex w-[133px] items-center bg-[#d7d7d7] pl-[2px]">
              <svg viewBox="0 0 16 16" className="h-[15px] w-[15px]" fill="#333"><path d="M8 0l8 8.500h-2V16H9.800v-5H6.200v5H2V8.500H0z" /></svg>
              <Fit w={90} className="ml-[7px]">Pantalla de inicio</Fit>
            </div>
            <div className="flex w-[81px] items-center bg-[#d7d7d7] pl-[3px]"><Fit w={58}>Sin título-1</Fit></div>
            <div className="flex w-[81px] items-center bg-[#cce1ff] pl-[3px]"><Fit w={59}>Sin título-2</Fit></div>
            <div className="flex w-[19px] items-center justify-center bg-[#d7d7d7]">
              <svg viewBox="0 0 10 10" className="h-[10px] w-[10px]" stroke="#a5a5a5" strokeWidth="2"><path d="M5 0v10M0 5h10" /></svg>
            </div>
          </div>
          <div className="h-px shrink-0 bg-[#10a8e4]" />
          <TopRuler />
          <div className="flex">
            <LeftRuler />
            <div className="flex w-[1609px] flex-col">
              <div className="relative h-[778px] bg-white">
                <Artwork />
                <div className="absolute inset-y-0 right-0 flex w-4 flex-col">
                  <div className="flex h-[17px] items-center justify-center bg-[#efefef]"><Chevron d={UP} c="stroke-[#444]" /></div>
                  <div className="mt-[376px] h-[147px] w-[15px] bg-[#bfbfbf]" />
                  <div className="mt-auto flex h-[17px] w-[15px] items-center justify-center bg-[#dadada]"><Chevron d={DOWN} /></div>
                </div>
              </div>
              <PageRow />
            </div>
          </div>
          <DocPalette />
        </div>
        <SidePalette />
      </div>
      <StatusBar />
      <div className="absolute left-[1301px] top-[915px] flex flex-col text-[#8d8d8d]/60">
        <Fit w={147} className="text-[18.500px] leading-[28px]">Activar Windows</Fit>
        <Fit w={310} className="text-[14px] leading-[18px]">Ir a Configuración de PC para activar Windows.</Fit>
      </div>
    </div>
  );
}
